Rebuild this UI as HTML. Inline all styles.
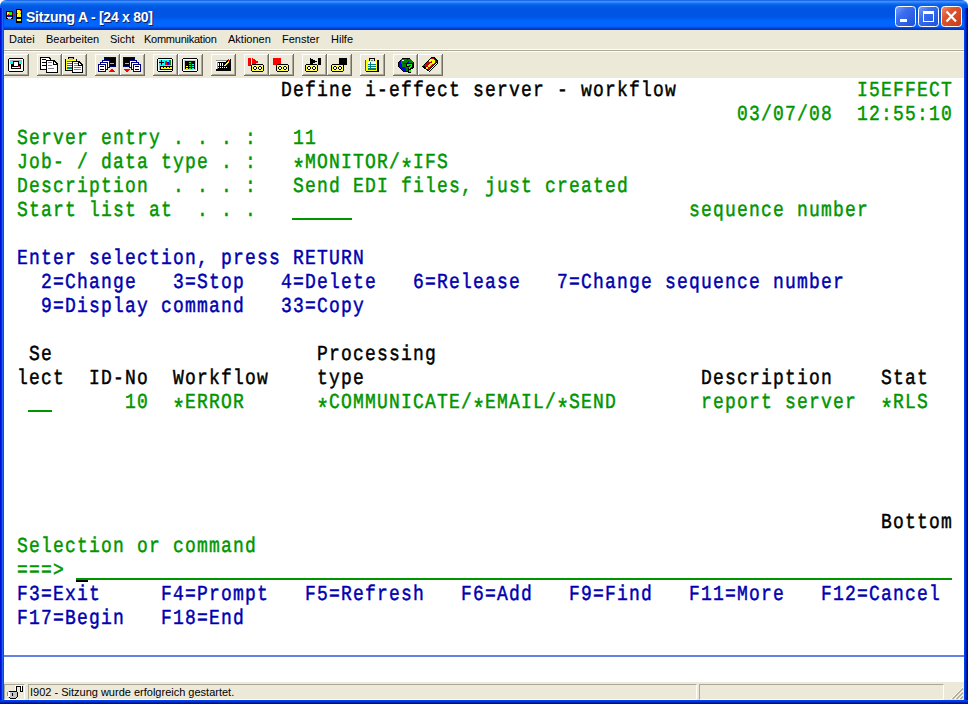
<!DOCTYPE html>
<html><head><meta charset="utf-8">
<style>
*{margin:0;padding:0;box-sizing:border-box}
html,body{width:968px;height:704px;overflow:hidden;background:#fff}
body{position:relative;font-family:"Liberation Sans",sans-serif}
.abs{position:absolute}
#title{left:0;top:0;width:968px;height:30px;border-radius:6px 6px 0 0;
background:linear-gradient(to bottom,#0a3fd4 0px,#3a93ff 1px,#3a93ff 2px,#1a76f5 3px,#0460e8 5px,#0056e2 8px,#0055e5 17px,#005ef5 19px,#0066ff 22px,#0066ff 26px,#0058f0 27px,#0046da 28px,#0036c2 29px,#0036c2 30px)}
#ttext{left:26px;top:9px;color:#fff;font:bold 14px "Liberation Sans",sans-serif;letter-spacing:-0.25px;white-space:pre;text-shadow:1px 1px 0 #0a246a}
#lb{left:0;top:8px;width:4px;height:696px;background:linear-gradient(to right,#0010d0 0,#0010d0 1px,#0828d0 1px,#0828d0 2px,#2060f8 2px,#2060f8 3px,#0050e0 3px,#0050e0 4px)}
#rb{left:964px;top:8px;width:4px;height:696px;background:linear-gradient(to right,#0044f0 0,#0044f0 1px,#0030c8 1px,#0030c8 2px,#00189c 2px,#00189c 3px,#000a80 3px,#000a80 4px)}
#bb{left:0;top:700px;width:968px;height:4px;background:linear-gradient(to bottom,#0040f0 0,#0040f0 1px,#0038e0 1px,#0038e0 2px,#0020a8 2px,#0020a8 3px,#001088 3px,#001088 4px)}
#menu{left:4px;top:30px;width:960px;height:19px;background:#ece9d8}
#menu span{position:absolute;top:3px;font-size:11px;color:#000;line-height:13px}
#tb{left:4px;top:49px;width:960px;height:29px;background:#ece9d8;border-top:1px solid #fff}
#sep{left:4px;top:50px;width:960px;height:1px;background:#aca899}
#term{left:4px;top:78px;width:960px;height:604px;background:#fff}
#oia{left:4px;top:655px;width:960px;height:2px;background:#6482e6}
#status{left:4px;top:682px;width:960px;height:18px;background:#ece9d8}
.pan{position:absolute;top:2px;height:16px;border-top:1px solid #aca899;border-left:1px solid #aca899;border-right:1px solid #fff;border-bottom:1px solid #fff}
#stext{left:30px;top:686px;font-size:11px;line-height:13px;color:#000;white-space:pre}
.t{position:absolute;height:24px;white-space:pre;font-family:"Liberation Mono",monospace;font-size:18px;letter-spacing:1.2px;line-height:24px;text-rendering:geometricPrecision;-webkit-text-stroke-width:0.4px;transform:scaleY(1.19);transform-origin:0 4px}
.g{color:#009600}.b{color:#000}.n{color:#0000b0}
.ul{position:absolute;height:2px;background:#009600}
.ast{position:relative;top:6.5px;left:-1px;font-size:22px;letter-spacing:-1.2px;line-height:0}
.cur{position:absolute;width:12px;height:2px;background:#000}
svg{position:absolute;left:0;top:0}
</style></head><body>
<div id="title" class="abs"></div>
<div id="ttext" class="abs">Sitzung A - [24 x 80]</div>
<div id="lb" class="abs"></div><div id="rb" class="abs"></div><div id="bb" class="abs"></div>
<div id="menu" class="abs">
<span style="left:5px">Datei</span><span style="left:42px">Bearbeiten</span><span style="left:106px">Sicht</span><span style="left:140px;letter-spacing:-0.25px">Kommunikation</span><span style="left:224px">Aktionen</span><span style="left:278px">Fenster</span><span style="left:327px">Hilfe</span>
</div>
<div id="tb" class="abs"></div>
<div id="sep" class="abs"></div><div class="abs" style="left:4px;top:51px;width:960px;height:1px;background:#fff"></div>
<div id="term" class="abs"></div>
<div id="oia" class="abs"></div>
<div id="status" class="abs">
 <div class="pan" style="left:0;width:21px"></div>
 <div class="pan" style="left:24px;width:669px"></div>
 <div class="pan" style="left:695px;width:245px"></div>
</div>
<div id="stext" class="abs">I902 - Sitzung wurde erfolgreich gestartet.</div>
<svg width="968" height="30">
<rect x="6" y="11" width="7" height="8" fill="#000"/>
<rect x="7" y="12" width="5" height="6" fill="#e0e0e0"/>
<rect x="7" y="12" width="5" height="4" fill="#ffff00"/>
<rect x="9" y="12" width="3" height="3" fill="#00ff00"/>
<rect x="7" y="15" width="5" height="2" fill="#0000ff"/>
<rect x="8" y="14" width="1" height="1" fill="#ff0000"/>
<rect x="8" y="18" width="3" height="1" fill="#c0c0c0"/>
<path d="M12 14l1-1 1 1 1-1v1l-1 1-1-1-1 1z" fill="#ff0000"/>
<rect x="16" y="9" width="6" height="14" fill="#000"/>
<rect x="17" y="10" width="4" height="7" fill="#ffff00"/>
<rect x="17" y="19" width="4" height="2" fill="#ffff00"/>
<rect x="17" y="13" width="1" height="1" fill="#00c000"/>
<rect x="20" y="13" width="1" height="1" fill="#00c000"/>
<rect x="20" y="10" width="1" height="1" fill="#ff0000"/>
<defs><linearGradient id="bl" x1="0" y1="0" x2="1" y2="1"><stop offset="0" stop-color="#7aa4ff"/><stop offset="0.35" stop-color="#3c6ef0"/><stop offset="1" stop-color="#1e50d8"/></linearGradient><linearGradient id="rd" x1="0" y1="0" x2="1" y2="1"><stop offset="0" stop-color="#f09070"/><stop offset="0.35" stop-color="#e0542e"/><stop offset="1" stop-color="#c83a18"/></linearGradient></defs>
<rect x="895.5" y="6.5" width="20" height="20" rx="3" ry="3" fill="url(#bl)" stroke="#fff" stroke-width="1"/>
<rect x="918.5" y="6.5" width="20" height="20" rx="3" ry="3" fill="url(#bl)" stroke="#fff" stroke-width="1"/>
<rect x="941.5" y="6.5" width="20" height="20" rx="3" ry="3" fill="url(#rd)" stroke="#fff" stroke-width="1"/>
<rect x="900" y="19" width="7" height="3" fill="#fff"/>
<rect x="923" y="11" width="11" height="3" fill="#fff"/>
<rect x="923" y="11" width="1" height="11" fill="#fff"/>
<rect x="933" y="11" width="1" height="11" fill="#fff"/>
<rect x="923" y="21" width="11" height="1" fill="#fff"/>
<path d="M946.5 11.5l9.5 10M956 11.5l-9.5 10" stroke="#fff" stroke-width="2.2" fill="none"/>
</svg>
<svg width="968" height="80" shape-rendering="crispEdges">
<rect x="4" y="54" width="25" height="22" fill="#ece9d8"/>
<rect x="4" y="54" width="24" height="1" fill="#fff"/>
<rect x="4" y="54" width="1" height="21" fill="#fff"/>
<rect x="27" y="55" width="1" height="20" fill="#aca899"/>
<rect x="5" y="74" width="23" height="1" fill="#aca899"/>
<rect x="28" y="54" width="1" height="22" fill="#716f64"/>
<rect x="4" y="75" width="25" height="1" fill="#716f64"/>
<rect x="37" y="54" width="25" height="22" fill="#ece9d8"/>
<rect x="37" y="54" width="24" height="1" fill="#fff"/>
<rect x="37" y="54" width="1" height="21" fill="#fff"/>
<rect x="60" y="55" width="1" height="20" fill="#aca899"/>
<rect x="38" y="74" width="23" height="1" fill="#aca899"/>
<rect x="61" y="54" width="1" height="22" fill="#716f64"/>
<rect x="37" y="75" width="25" height="1" fill="#716f64"/>
<rect x="62" y="54" width="25" height="22" fill="#ece9d8"/>
<rect x="62" y="54" width="24" height="1" fill="#fff"/>
<rect x="62" y="54" width="1" height="21" fill="#fff"/>
<rect x="85" y="55" width="1" height="20" fill="#aca899"/>
<rect x="63" y="74" width="23" height="1" fill="#aca899"/>
<rect x="86" y="54" width="1" height="22" fill="#716f64"/>
<rect x="62" y="75" width="25" height="1" fill="#716f64"/>
<rect x="95" y="54" width="25" height="22" fill="#ece9d8"/>
<rect x="95" y="54" width="24" height="1" fill="#fff"/>
<rect x="95" y="54" width="1" height="21" fill="#fff"/>
<rect x="118" y="55" width="1" height="20" fill="#aca899"/>
<rect x="96" y="74" width="23" height="1" fill="#aca899"/>
<rect x="119" y="54" width="1" height="22" fill="#716f64"/>
<rect x="95" y="75" width="25" height="1" fill="#716f64"/>
<rect x="120" y="54" width="25" height="22" fill="#ece9d8"/>
<rect x="120" y="54" width="24" height="1" fill="#fff"/>
<rect x="120" y="54" width="1" height="21" fill="#fff"/>
<rect x="143" y="55" width="1" height="20" fill="#aca899"/>
<rect x="121" y="74" width="23" height="1" fill="#aca899"/>
<rect x="144" y="54" width="1" height="22" fill="#716f64"/>
<rect x="120" y="75" width="25" height="1" fill="#716f64"/>
<rect x="153" y="54" width="25" height="22" fill="#ece9d8"/>
<rect x="153" y="54" width="24" height="1" fill="#fff"/>
<rect x="153" y="54" width="1" height="21" fill="#fff"/>
<rect x="176" y="55" width="1" height="20" fill="#aca899"/>
<rect x="154" y="74" width="23" height="1" fill="#aca899"/>
<rect x="177" y="54" width="1" height="22" fill="#716f64"/>
<rect x="153" y="75" width="25" height="1" fill="#716f64"/>
<rect x="178" y="54" width="25" height="22" fill="#ece9d8"/>
<rect x="178" y="54" width="24" height="1" fill="#fff"/>
<rect x="178" y="54" width="1" height="21" fill="#fff"/>
<rect x="201" y="55" width="1" height="20" fill="#aca899"/>
<rect x="179" y="74" width="23" height="1" fill="#aca899"/>
<rect x="202" y="54" width="1" height="22" fill="#716f64"/>
<rect x="178" y="75" width="25" height="1" fill="#716f64"/>
<rect x="211" y="54" width="25" height="22" fill="#ece9d8"/>
<rect x="211" y="54" width="24" height="1" fill="#fff"/>
<rect x="211" y="54" width="1" height="21" fill="#fff"/>
<rect x="234" y="55" width="1" height="20" fill="#aca899"/>
<rect x="212" y="74" width="23" height="1" fill="#aca899"/>
<rect x="235" y="54" width="1" height="22" fill="#716f64"/>
<rect x="211" y="75" width="25" height="1" fill="#716f64"/>
<rect x="244" y="54" width="25" height="22" fill="#ece9d8"/>
<rect x="244" y="54" width="24" height="1" fill="#fff"/>
<rect x="244" y="54" width="1" height="21" fill="#fff"/>
<rect x="267" y="55" width="1" height="20" fill="#aca899"/>
<rect x="245" y="74" width="23" height="1" fill="#aca899"/>
<rect x="268" y="54" width="1" height="22" fill="#716f64"/>
<rect x="244" y="75" width="25" height="1" fill="#716f64"/>
<rect x="269" y="54" width="25" height="22" fill="#ece9d8"/>
<rect x="269" y="54" width="24" height="1" fill="#fff"/>
<rect x="269" y="54" width="1" height="21" fill="#fff"/>
<rect x="292" y="55" width="1" height="20" fill="#aca899"/>
<rect x="270" y="74" width="23" height="1" fill="#aca899"/>
<rect x="293" y="54" width="1" height="22" fill="#716f64"/>
<rect x="269" y="75" width="25" height="1" fill="#716f64"/>
<rect x="302" y="54" width="25" height="22" fill="#ece9d8"/>
<rect x="302" y="54" width="24" height="1" fill="#fff"/>
<rect x="302" y="54" width="1" height="21" fill="#fff"/>
<rect x="325" y="55" width="1" height="20" fill="#aca899"/>
<rect x="303" y="74" width="23" height="1" fill="#aca899"/>
<rect x="326" y="54" width="1" height="22" fill="#716f64"/>
<rect x="302" y="75" width="25" height="1" fill="#716f64"/>
<rect x="327" y="54" width="25" height="22" fill="#ece9d8"/>
<rect x="327" y="54" width="24" height="1" fill="#fff"/>
<rect x="327" y="54" width="1" height="21" fill="#fff"/>
<rect x="350" y="55" width="1" height="20" fill="#aca899"/>
<rect x="328" y="74" width="23" height="1" fill="#aca899"/>
<rect x="351" y="54" width="1" height="22" fill="#716f64"/>
<rect x="327" y="75" width="25" height="1" fill="#716f64"/>
<rect x="360" y="54" width="25" height="22" fill="#ece9d8"/>
<rect x="360" y="54" width="24" height="1" fill="#fff"/>
<rect x="360" y="54" width="1" height="21" fill="#fff"/>
<rect x="383" y="55" width="1" height="20" fill="#aca899"/>
<rect x="361" y="74" width="23" height="1" fill="#aca899"/>
<rect x="384" y="54" width="1" height="22" fill="#716f64"/>
<rect x="360" y="75" width="25" height="1" fill="#716f64"/>
<rect x="393" y="54" width="25" height="22" fill="#ece9d8"/>
<rect x="393" y="54" width="24" height="1" fill="#fff"/>
<rect x="393" y="54" width="1" height="21" fill="#fff"/>
<rect x="416" y="55" width="1" height="20" fill="#aca899"/>
<rect x="394" y="74" width="23" height="1" fill="#aca899"/>
<rect x="417" y="54" width="1" height="22" fill="#716f64"/>
<rect x="393" y="75" width="25" height="1" fill="#716f64"/>
<rect x="418" y="54" width="25" height="22" fill="#ece9d8"/>
<rect x="418" y="54" width="24" height="1" fill="#fff"/>
<rect x="418" y="54" width="1" height="21" fill="#fff"/>
<rect x="441" y="55" width="1" height="20" fill="#aca899"/>
<rect x="419" y="74" width="23" height="1" fill="#aca899"/>
<rect x="442" y="54" width="1" height="22" fill="#716f64"/>
<rect x="418" y="75" width="25" height="1" fill="#716f64"/>
<rect x="9" y="58" width="14" height="1" fill="#000"/>
<rect x="9" y="71" width="14" height="1" fill="#000"/>
<rect x="8" y="59" width="1" height="12" fill="#000"/>
<rect x="23" y="59" width="1" height="12" fill="#000"/>
<rect x="9" y="59" width="14" height="12" fill="#fff"/>
<rect x="10" y="60" width="12" height="1" fill="#b0a8b0"/>
<rect x="10" y="61" width="12" height="3" fill="#00ffff"/>
<rect x="11" y="64" width="10" height="5" fill="#000"/>
<rect x="13" y="61" width="6" height="6" fill="#000"/>
<rect x="14" y="62" width="4" height="4" fill="#fff"/>
<rect x="12" y="67" width="8" height="1" fill="#fff"/>
<rect x="18" y="66" width="2" height="1" fill="#ff0000"/>
<path d="M40 57h9l2 2v11h-11z" fill="#000"/>
<rect x="41" y="58" width="8" height="11" fill="#fff"/>
<rect x="49" y="59" width="1" height="1" fill="#fff"/>
<rect x="42" y="59" width="4" height="1" fill="#000"/>
<rect x="42" y="62" width="4" height="1" fill="#000"/>
<rect x="42" y="65" width="4" height="1" fill="#000"/>
<path d="M46 60h8l4 4v9h-12z" fill="#000"/>
<path d="M47 61h6v4h4v7h-10z" fill="#fff"/>
<path d="M54 61.5l2.5 2.5h-2.5z" fill="#fff"/>
<rect x="48" y="62" width="4" height="1" fill="#808080"/>
<rect x="48" y="65" width="4" height="1" fill="#808080"/>
<rect x="48" y="68" width="6" height="1" fill="#808080"/>
<rect x="65" y="59" width="12" height="12" fill="#000"/>
<rect x="66" y="59" width="10" height="11" fill="#ffff00"/>
<rect x="67" y="61" width="8" height="8" fill="#008080"/>
<rect x="67" y="62" width="7" height="1" fill="#fff"/>
<rect x="67" y="64" width="7" height="1" fill="#fff"/>
<rect x="67" y="66" width="7" height="1" fill="#fff"/>
<rect x="68" y="57" width="6" height="2" fill="#000"/>
<rect x="69" y="58" width="4" height="2" fill="#c0c0c0"/>
<path d="M72 61h7l4 4v8h-11z" fill="#000"/>
<path d="M73 62h5v4h4v6h-9z" fill="#fff"/>
<path d="M79 62.5l2.5 2.5h-2.5z" fill="#fff"/>
<rect x="74" y="63" width="4" height="1" fill="#808080"/>
<rect x="74" y="65" width="4" height="1" fill="#808080"/>
<rect x="74" y="67" width="7" height="1" fill="#808080"/>
<rect x="74" y="69" width="7" height="1" fill="#808080"/>
<rect x="104" y="57" width="12" height="10" fill="#000080"/>
<rect x="105" y="58" width="10" height="8" fill="#000"/>
<rect x="109" y="63" width="5" height="1" fill="#00ffff"/>
<rect x="102" y="60" width="8" height="8" fill="#000080"/>
<rect x="103" y="61" width="6" height="6" fill="#fff"/>
<rect x="100" y="62" width="8" height="8" fill="#000080"/>
<rect x="101" y="63" width="6" height="6" fill="#fff"/>
<rect x="98" y="64" width="8" height="8" fill="#000080"/>
<rect x="99" y="65" width="6" height="6" fill="#fff"/>
<rect x="100" y="66" width="4" height="1" fill="#000"/>
<rect x="100" y="69" width="4" height="1" fill="#000"/>
<path d="M108.5 72h7l-3.5-3.5z" fill="#ff0000"/>
<rect x="123" y="57" width="12" height="10" fill="#000080"/>
<rect x="124" y="58" width="10" height="8" fill="#000"/>
<rect x="125" y="63" width="5" height="1" fill="#00ffff"/>
<rect x="129" y="60" width="8" height="8" fill="#000080"/>
<rect x="130" y="61" width="6" height="6" fill="#fff"/>
<rect x="131" y="62" width="8" height="8" fill="#000080"/>
<rect x="132" y="63" width="6" height="6" fill="#fff"/>
<rect x="133" y="64" width="8" height="8" fill="#000080"/>
<rect x="134" y="65" width="6" height="6" fill="#fff"/>
<rect x="135" y="66" width="4" height="1" fill="#000"/>
<rect x="135" y="69" width="4" height="1" fill="#000"/>
<path d="M123.5 69h7l-3.5 3.5z" fill="#ff0000"/>
<rect x="158" y="58" width="14" height="1" fill="#000"/>
<rect x="158" y="71" width="14" height="1" fill="#000"/>
<rect x="157" y="59" width="1" height="12" fill="#000"/>
<rect x="172" y="59" width="1" height="12" fill="#000"/>
<rect x="158" y="59" width="14" height="12" fill="#e8ffff"/>
<rect x="159" y="60" width="12" height="10" fill="#00ffff"/>
<rect x="159" y="62" width="5" height="1" fill="#000"/>
<rect x="161" y="60" width="1" height="5" fill="#000"/>
<rect x="165" y="61" width="2" height="4" fill="#ff0000"/>
<rect x="167" y="62" width="2" height="3" fill="#0000ff"/>
<rect x="169" y="60" width="2" height="5" fill="#008000"/>
<rect x="160" y="66" width="12" height="4" fill="#000"/>
<rect x="161" y="67" width="11" height="2" fill="#ffff00"/>
<rect x="163" y="67" width="1" height="1" fill="#000"/>
<rect x="166" y="67" width="1" height="1" fill="#000"/>
<rect x="169" y="67" width="1" height="1" fill="#000"/>
<rect x="183" y="58" width="14" height="1" fill="#000"/>
<rect x="183" y="71" width="14" height="1" fill="#000"/>
<rect x="182" y="59" width="1" height="12" fill="#000"/>
<rect x="197" y="59" width="1" height="12" fill="#000"/>
<rect x="183" y="59" width="14" height="12" fill="#fff"/>
<rect x="184" y="60" width="12" height="10" fill="#c8c8c8"/>
<rect x="185" y="61" width="10" height="8" fill="#000"/>
<rect x="189" y="62" width="2" height="1" fill="#00ff00"/>
<rect x="189" y="64" width="2" height="1" fill="#00ff00"/>
<rect x="189" y="66" width="2" height="1" fill="#00ff00"/>
<rect x="189" y="68" width="2" height="1" fill="#00ff00"/>
<rect x="186" y="66" width="2" height="1" fill="#ffff00"/>
<rect x="186" y="68" width="2" height="1" fill="#ffff00"/>
<rect x="192" y="64" width="2" height="1" fill="#00ffff"/>
<rect x="192" y="66" width="2" height="1" fill="#00ffff"/>
<rect x="192" y="68" width="2" height="1" fill="#00ffff"/>
<rect x="216" y="60" width="14" height="10" fill="#909090"/>
<rect x="216" y="61" width="1" height="8" fill="#fff"/>
<rect x="217" y="61" width="12" height="1" fill="#fff"/>
<rect x="218" y="62" width="12" height="7" fill="#000"/>
<rect x="216" y="69" width="15" height="2" fill="#000"/>
<rect x="230" y="61" width="1" height="9" fill="#000"/>
<rect x="218" y="63" width="1" height="2" fill="#fff"/>
<rect x="220" y="63" width="1" height="2" fill="#fff"/>
<rect x="222" y="63" width="1" height="2" fill="#fff"/>
<rect x="218" y="65" width="1" height="1" fill="#fff"/>
<rect x="220" y="65" width="1" height="1" fill="#fff"/>
<rect x="222" y="65" width="1" height="1" fill="#fff"/>
<rect x="224" y="65" width="1" height="1" fill="#fff"/>
<rect x="226" y="65" width="1" height="1" fill="#fff"/>
<rect x="218" y="67" width="1" height="1" fill="#fff"/>
<rect x="220" y="67" width="1" height="1" fill="#fff"/>
<rect x="222" y="67" width="1" height="1" fill="#fff"/>
<rect x="224" y="67" width="1" height="1" fill="#fff"/>
<rect x="226" y="67" width="1" height="1" fill="#fff"/>
<path d="M223 65l5-6h3v2l-6 6h-2z" fill="#000"/>
<path d="M224 65l4-4h1v1l-4 4h-1z" fill="#ffff00"/>
<rect x="228" y="59" width="2" height="2" fill="#ff0000"/>
<rect x="229" y="59" width="1" height="1" fill="#fff"/>
<rect x="248" y="58" width="3" height="8" fill="#ff0000"/>
<rect x="250" y="59" width="1" height="7" fill="#c00000"/>
<path d="M252 58v8l7-4z" fill="#ff0000"/>
<rect x="252" y="64" width="11" height="1" fill="#000"/>
<rect x="252" y="71" width="11" height="1" fill="#000"/>
<rect x="251" y="65" width="1" height="6" fill="#000"/>
<rect x="263" y="65" width="1" height="6" fill="#000"/>
<rect x="252" y="65" width="11" height="6" fill="#ffff40"/>
<rect x="254" y="66" width="2" height="1" fill="#000"/>
<rect x="254" y="69" width="2" height="1" fill="#000"/>
<rect x="253" y="67" width="1" height="2" fill="#000"/>
<rect x="256" y="67" width="1" height="2" fill="#000"/>
<rect x="254" y="67" width="2" height="2" fill="#fff"/>
<rect x="259" y="66" width="2" height="1" fill="#000"/>
<rect x="259" y="69" width="2" height="1" fill="#000"/>
<rect x="258" y="67" width="1" height="2" fill="#000"/>
<rect x="261" y="67" width="1" height="2" fill="#000"/>
<rect x="259" y="67" width="2" height="2" fill="#fff"/>
<rect x="273" y="58" width="8" height="7" fill="#ff0000"/>
<rect x="277" y="64" width="11" height="1" fill="#000"/>
<rect x="277" y="71" width="11" height="1" fill="#000"/>
<rect x="276" y="65" width="1" height="6" fill="#000"/>
<rect x="288" y="65" width="1" height="6" fill="#000"/>
<rect x="277" y="65" width="11" height="6" fill="#ffff40"/>
<rect x="279" y="66" width="2" height="1" fill="#000"/>
<rect x="279" y="69" width="2" height="1" fill="#000"/>
<rect x="278" y="67" width="1" height="2" fill="#000"/>
<rect x="281" y="67" width="1" height="2" fill="#000"/>
<rect x="279" y="67" width="2" height="2" fill="#fff"/>
<rect x="284" y="66" width="2" height="1" fill="#000"/>
<rect x="284" y="69" width="2" height="1" fill="#000"/>
<rect x="283" y="67" width="1" height="2" fill="#000"/>
<rect x="286" y="67" width="1" height="2" fill="#000"/>
<rect x="284" y="67" width="2" height="2" fill="#fff"/>
<path d="M310 58v7l7-3.5z" fill="#000"/>
<rect x="318" y="58" width="3" height="7" fill="#000"/>
<rect x="306" y="64" width="11" height="1" fill="#000"/>
<rect x="306" y="71" width="11" height="1" fill="#000"/>
<rect x="305" y="65" width="1" height="6" fill="#000"/>
<rect x="317" y="65" width="1" height="6" fill="#000"/>
<rect x="306" y="65" width="11" height="6" fill="#ffff40"/>
<rect x="308" y="66" width="2" height="1" fill="#000"/>
<rect x="308" y="69" width="2" height="1" fill="#000"/>
<rect x="307" y="67" width="1" height="2" fill="#000"/>
<rect x="310" y="67" width="1" height="2" fill="#000"/>
<rect x="308" y="67" width="2" height="2" fill="#fff"/>
<rect x="313" y="66" width="2" height="1" fill="#000"/>
<rect x="313" y="69" width="2" height="1" fill="#000"/>
<rect x="312" y="67" width="1" height="2" fill="#000"/>
<rect x="315" y="67" width="1" height="2" fill="#000"/>
<rect x="313" y="67" width="2" height="2" fill="#fff"/>
<rect x="339" y="58" width="8" height="7" fill="#000"/>
<rect x="332" y="64" width="11" height="1" fill="#000"/>
<rect x="332" y="71" width="11" height="1" fill="#000"/>
<rect x="331" y="65" width="1" height="6" fill="#000"/>
<rect x="343" y="65" width="1" height="6" fill="#000"/>
<rect x="332" y="65" width="11" height="6" fill="#ffff40"/>
<rect x="334" y="66" width="2" height="1" fill="#000"/>
<rect x="334" y="69" width="2" height="1" fill="#000"/>
<rect x="333" y="67" width="1" height="2" fill="#000"/>
<rect x="336" y="67" width="1" height="2" fill="#000"/>
<rect x="334" y="67" width="2" height="2" fill="#fff"/>
<rect x="339" y="66" width="2" height="1" fill="#000"/>
<rect x="339" y="69" width="2" height="1" fill="#000"/>
<rect x="338" y="67" width="1" height="2" fill="#000"/>
<rect x="341" y="67" width="1" height="2" fill="#000"/>
<rect x="339" y="67" width="2" height="2" fill="#fff"/>
<rect x="365" y="60" width="1" height="11" fill="#606000"/>
<rect x="366" y="60" width="11" height="11" fill="#ffff00"/>
<rect x="377" y="60" width="2" height="12" fill="#000"/>
<rect x="366" y="71" width="12" height="1" fill="#000"/>
<rect x="368" y="62" width="8" height="8" fill="#008080"/>
<rect x="368" y="62" width="8" height="2" fill="#fff"/>
<rect x="368" y="65" width="8" height="1" fill="#fff"/>
<rect x="368" y="67" width="8" height="1" fill="#fff"/>
<rect x="370" y="62" width="1" height="8" fill="#008080"/>
<rect x="369" y="58" width="6" height="3" fill="#000"/>
<rect x="370" y="59" width="4" height="2" fill="#e0e0e0"/>
<rect x="371" y="60" width="2" height="1" fill="#808080"/>
<path d="M403 58h6l5 5v3l-5 6h-6l-5-5v-5z" fill="#000"/>
<path d="M403.5 59h5l4.5 4.5v2l-4.5 5.5h-5l-4.5-4.5v-4.5z" fill="#0000ff"/>
<path d="M401 59h4l3 1v2l-3 1h-2l-1 1h-1v-2z" fill="#008000"/>
<path d="M402 64h5l2 1v3l-1 1v2h-2v-2l-2-2h-2v-2z" fill="#008000"/>
<path d="M408 59h2l3 3v1h-4z" fill="#008000"/>
<rect x="402" y="60" width="2" height="1" fill="#fff"/>
<path d="M406 63h6l2 2v2l-2 2h-1v1h-3v-2l2-2h-1v1h-3z" fill="#000"/>
<path d="M407 64h4l1 1v2l-2 1v1h-1v-2l2-1v-1h-2v1h-2z" fill="#00ff00"/>
<rect x="408" y="70" width="3" height="3" fill="#000"/>
<rect x="409" y="70" width="2" height="2" fill="#00ff00"/>
<path d="M431 57h3l4 4v2l-9 9h-2l-5-5v-1z" fill="#000"/>
<path d="M431.5 58h2l3.5 3.5l-8.5 8.5l-5-4.5z" fill="#d00000"/>
<path d="M423 67.5l5 4 9-9v1l-9 8.5l-5-3.5z" fill="#fff"/>
<path d="M430 59h3l2 2v1l-2 2h-1l-2 2v1h-2v-2l2-2h1l1-1-1-1-1 1h-1z" fill="#ffff00"/>
<rect x="426" y="67" width="2" height="2" fill="#ffff00"/>
</svg>
<div class="t b" style="left:281px;top:78px">Define i-effect server - workflow</div>
<div class="t g" style="left:857px;top:78px">I5EFFECT</div>
<div class="t g" style="left:737px;top:102px">03/07/08</div>
<div class="t g" style="left:857px;top:102px">12:55:10</div>
<div class="t g" style="left:17px;top:126px">Server entry . . . :</div>
<div class="t g" style="left:293px;top:126px">11</div>
<div class="t g" style="left:17px;top:150px">Job- / data type . :</div>
<div class="t g" style="left:293px;top:150px"><span class="ast">*</span>MONITOR/<span class="ast">*</span>IFS</div>
<div class="t g" style="left:17px;top:174px">Description  . . . :</div>
<div class="t g" style="left:293px;top:174px">Send EDI files, just created</div>
<div class="t g" style="left:17px;top:198px">Start list at  . . .</div>
<div class="t g" style="left:689px;top:198px">sequence number</div>
<div class="t n" style="left:17px;top:246px">Enter selection, press RETURN</div>
<div class="t n" style="left:41px;top:270px">2=Change</div>
<div class="t n" style="left:173px;top:270px">3=Stop</div>
<div class="t n" style="left:281px;top:270px">4=Delete</div>
<div class="t n" style="left:413px;top:270px">6=Release</div>
<div class="t n" style="left:557px;top:270px">7=Change sequence number</div>
<div class="t n" style="left:41px;top:294px">9=Display command</div>
<div class="t n" style="left:281px;top:294px">33=Copy</div>
<div class="t b" style="left:29px;top:342px">Se</div>
<div class="t b" style="left:317px;top:342px">Processing</div>
<div class="t b" style="left:17px;top:366px">lect</div>
<div class="t b" style="left:89px;top:366px">ID-No</div>
<div class="t b" style="left:173px;top:366px">Workflow</div>
<div class="t b" style="left:317px;top:366px">type</div>
<div class="t b" style="left:701px;top:366px">Description</div>
<div class="t b" style="left:881px;top:366px">Stat</div>
<div class="t g" style="left:125px;top:390px">10</div>
<div class="t g" style="left:173px;top:390px"><span class="ast">*</span>ERROR</div>
<div class="t g" style="left:317px;top:390px"><span class="ast">*</span>COMMUNICATE/<span class="ast">*</span>EMAIL/<span class="ast">*</span>SEND</div>
<div class="t g" style="left:701px;top:390px">report server</div>
<div class="t g" style="left:881px;top:390px"><span class="ast">*</span>RLS</div>
<div class="t b" style="left:881px;top:510px">Bottom</div>
<div class="t g" style="left:17px;top:534px">Selection or command</div>
<div class="t g" style="left:17px;top:558px">===></div>
<div class="t n" style="left:17px;top:582px">F3=Exit</div>
<div class="t n" style="left:161px;top:582px">F4=Prompt</div>
<div class="t n" style="left:305px;top:582px">F5=Refresh</div>
<div class="t n" style="left:461px;top:582px">F6=Add</div>
<div class="t n" style="left:569px;top:582px">F9=Find</div>
<div class="t n" style="left:689px;top:582px">F11=More</div>
<div class="t n" style="left:821px;top:582px">F12=Cancel</div>
<div class="t n" style="left:17px;top:606px">F17=Begin</div>
<div class="t n" style="left:161px;top:606px">F18=End</div>
<div class="ul" style="left:292px;top:218px;width:60px"></div>
<div class="ul" style="left:28px;top:410px;width:24px"></div>
<div class="ul" style="left:76px;top:578px;width:876px"></div>
<div class="cur" style="left:76px;top:580px"></div>
<svg width="968" height="704" shape-rendering="crispEdges">
<rect x="15" y="685" width="7" height="1" fill="#fff"/>
<rect x="16" y="686" width="4" height="1" fill="#000"/>
<rect x="15" y="686" width="1" height="5" fill="#fff"/>
<rect x="16" y="687" width="1" height="4" fill="#000"/>
<rect x="21" y="685" width="1" height="6" fill="#fff"/>
<rect x="20" y="686" width="1" height="5" fill="#000"/>
<rect x="22" y="686" width="1" height="6" fill="#000"/>
<rect x="20" y="691" width="3" height="1" fill="#000"/>
<rect x="8" y="691" width="9" height="7" fill="#c4c4c4"/>
<rect x="8" y="692" width="2" height="5" fill="#fff"/>
<rect x="7" y="692" width="1" height="4" fill="#909090"/>
<rect x="9" y="691" width="8" height="1" fill="#000"/>
<rect x="17" y="692" width="1" height="5" fill="#000"/>
<rect x="16" y="697" width="1" height="1" fill="#000"/>
<rect x="9" y="697" width="1" height="1" fill="#000"/>
<rect x="10" y="698" width="6" height="1" fill="#000"/>
<rect x="12" y="693" width="1" height="3" fill="#000"/>
<path d="M951 699 L963 687" stroke="#fff" stroke-width="1" shape-rendering="auto"/>
<path d="M952.5 699 L963 688.5" stroke="#aca899" stroke-width="1.5" shape-rendering="auto"/>
<path d="M955 699 L963 691" stroke="#fff" stroke-width="1" shape-rendering="auto"/>
<path d="M956.5 699 L963 692.5" stroke="#aca899" stroke-width="1.5" shape-rendering="auto"/>
<path d="M959 699 L963 695" stroke="#fff" stroke-width="1" shape-rendering="auto"/>
<path d="M960.5 699 L963 696.5" stroke="#aca899" stroke-width="1.5" shape-rendering="auto"/>
</svg>
</body></html>
